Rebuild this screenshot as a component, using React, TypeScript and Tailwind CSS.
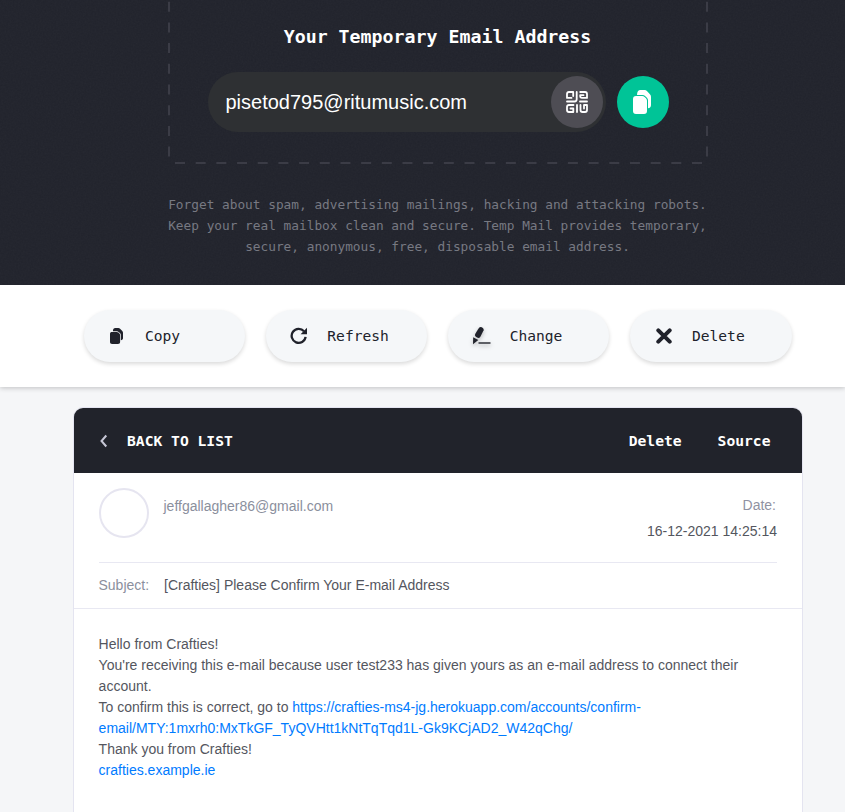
import type { ReactNode } from 'react';

const MONO = "font-['DejaVu_Sans_Mono','Liberation_Mono',monospace]";

function CopyIcon({ className }: { className?: string }) {
  return (
    <svg viewBox="0 0 18 24" preserveAspectRatio="none" className={className} fill="currentColor">
      <path d="M4 5C4.200 1.600 5.200 0 7.400 0h4.200c1 0 1.700.3 2.300 1l2.800 3c.9.8 1.300 1.800 1.300 3v8c0 2-1 3-3 3.200V10.500c0-1.400-.6-2.500-1.600-3.300l-1.100-1c-.8-.7-1.700-1.200-2.800-1.200z" />
      <path d="M3 6h6.200c1 0 1.700.3 2.400.9l1.400 1.400c.7.7 1 1.500 1 2.500V21c0 2-1 3-3 3H3c-2 0-3-1-3-3V9c0-2 1-3 3-3z" />
    </svg>
  );
}

function QrIcon() {
  return (
    <svg width="22" height="22" viewBox="0 0 22 22" fill="none" stroke="white" strokeWidth="1.800" strokeLinejoin="round" strokeLinecap="round">
      <path d="M5.500 6.900H1V3Q1 1 3 1H7.200V5" />
      <path d="M10.700 1V8.300Q10.700 10.500 8.500 10.500H1" />
      <path d="M14.200 1H19Q21 1 21 3V6.900H16Q14.200 6.900 14.200 5V4.200H17.500" />
      <path d="M14 10.500H21" />
      <path d="M7.500 14H3Q1 14 1 16V19Q1 21 3 21H7.300V17.500H4.500" />
      <path d="M11 14V21M14.500 14V19Q14.500 21 16.500 21H19Q21 21 21 19V14H18V17.500" />
    </svg>
  );
}

function RefreshIcon() {
  return (
    <svg width="18" height="18" viewBox="0 0 18 18" fill="none">
      <path d="M14 4.300A7 7 0 1 0 15.600 9.800" stroke="#20222b" strokeWidth="2.300" />
      <path d="M17 .8V7.200H10.600z" fill="#20222b" />
    </svg>
  );
}

function ChangeIcon() {
  return (
    <svg width="20" height="20" viewBox="0 0 20 20" className="drop-shadow-[0_2px_2px_rgba(0,0,0,0.25)]">
      <path d="M6.900 3.400 8.300 1.500Q9.400.5 10.800 1.300L11.800 1.900Q13.100 2.700 12.600 4.200L9.500 10.400Q8.400 12.300 6.700 11.800L4.800 10.700Q3.400 9.600 4.200 7.900z" fill="#20222b" />
      <path d="M2.200 11.300 7.300 14.100 2 18.300z" fill="#20222b" />
      <path d="M7.500 17H19.500" stroke="#55575d" strokeWidth="1.900" />
    </svg>
  );
}

function ActionButton({ icon, label }: { icon: ReactNode; label: string }) {
  return (
    <button className="flex h-[52px] items-center rounded-full bg-[#f5f7f9] pl-[23px] shadow-[0_2px_4px_rgba(0,0,0,0.15)]">
      <span className="flex w-5 justify-center">{icon}</span>
      <span className={`${MONO} ml-[18.500px] text-[14.600px] text-[#20222b]`}>{label}</span>
    </button>
  );
}

export default function App() {
  return (
    <div className="h-[812px] overflow-hidden bg-[#f5f6f8] font-['Liberation_Sans',Arial,sans-serif]">
      <header className="relative z-10 h-[285px] bg-[#21232c]">
        <svg className="pointer-events-none absolute inset-0 opacity-[0.035]" width="845" height="285">
          <filter id="grain" x="0" y="0" width="100%" height="100%">
            <feTurbulence type="fractalNoise" baseFrequency="0.6" numOctaves="2" seed="4" />
            <feColorMatrix type="saturate" values="0" />
          </filter>
          <rect width="845" height="285" filter="url(#grain)" />
        </svg>
        <svg className="pointer-events-none absolute top-0 left-0" width="845" height="170" fill="none" stroke="#3b3c46" strokeWidth="2">
          <path d="M169 1.700V157M707 1.700V157" strokeDasharray="10 10.700" />
          <path d="M175 163H703" strokeDasharray="10 10.680" />
        </svg>
        <div className="relative ml-[168px] flex w-[539px] flex-col items-center pt-[25px]">
          <h1 className={`${MONO} h-6 text-[18.260px] leading-6 font-bold whitespace-nowrap text-white`}>Your Temporary Email Address</h1>
          <div className="mt-[23px] flex items-center gap-[11px] pl-[1px]">
            <div className="flex h-[60px] w-[398px] items-center justify-between rounded-[30px] bg-[#2e3033] pr-[3px] pl-[18px]">
              <span className="text-[20px] text-white">pisetod795@ritumusic.com</span>
              <button className="flex size-[52px] items-center justify-center rounded-full bg-[#4e4d54]">
                <QrIcon />
              </button>
            </div>
            <button className="flex size-[52px] items-center justify-center rounded-full bg-[#00c497] pr-[1px] text-white">
              <CopyIcon className="h-6 w-[18px]" />
            </button>
          </div>
          <p className={`${MONO} mt-[62px] text-center text-[12.790px] leading-[21px] whitespace-nowrap text-[#777982]`}>
            Forget about spam, advertising mailings, hacking and attacking robots.
            <br />
            Keep your real mailbox clean and secure. Temp Mail provides temporary,
            <br />
            secure, anonymous, free, disposable email address.
          </p>
        </div>
      </header>

      <nav className="relative h-[102px] bg-white px-[53px] pt-[25px] pl-[83.500px] shadow-[0_1px_5px_rgba(0,0,0,0.22)]">
        <div className="grid w-[708px] grid-cols-4 gap-[21.300px]">
          <ActionButton icon={<CopyIcon className="h-[16px] w-[13px] text-[#20222b]" />} label="Copy" />
          <ActionButton icon={<RefreshIcon />} label="Refresh" />
          <ActionButton icon={<ChangeIcon />} label="Change" />
          <ActionButton
            icon={
              <svg width="16" height="16" viewBox="0 0 16 16" stroke="#20222b" strokeWidth="4" strokeLinecap="round" className="ml-[2px]">
                <path d="M2.300 2.300 13.700 13.700M13.700 2.300 2.300 13.700" />
              </svg>
            }
            label="Delete"
          />
        </div>
      </nav>

      <main className="mt-5 ml-[73px] h-[440px] w-[730px] overflow-hidden rounded-t-[10px] border border-[#e4e4f0] bg-white">
        <div className={`${MONO} flex h-[65px] items-center bg-[#21232b] pr-[31.500px] pl-[25px] text-[14.650px] font-bold text-white`}>
          <svg width="9" height="14" viewBox="0 0 9 14" fill="none" stroke="#c6c6d5" strokeWidth="2">
            <path d="M7.300 1.500 2.500 7l4.800 5.500" />
          </svg>
          <span className="ml-[19px]">BACK TO LIST</span>
          <span className="ml-auto">Delete</span>
          <span className="ml-[36px]">Source</span>
        </div>
        <div className="mx-[25px] flex h-[90px] border-b border-[#e8e8f2] pt-[15px] text-[14px]">
          <div className="size-[50px] rounded-full border-2 border-[#e6e5f0]" />
          <span className="mt-[8px] ml-[14.500px] text-[#8b8f9d]">jeffgallagher86@gmail.com</span>
          <div className="mt-[4px] ml-auto text-right leading-[26px]">
            <div className="pr-[1px] text-[#9092a2]">Date:</div>
            <div className="text-[#54565e]">16-12-2021 14:25:14</div>
          </div>
        </div>
        <div className="flex h-[46px] items-center border-b border-[#e8e8f2] pr-[25px] pl-[24.500px] text-[14px]">
          <span className="w-[65.500px] text-[#8b8f9d]">Subject:</span>
          <span className="text-[#54565e]">[Crafties] Please Confirm Your E-mail Address</span>
        </div>
        <div className="pt-[25px] pr-[25px] pl-[24.600px] text-[14px] leading-[21px] whitespace-nowrap text-[#54565e]">
          Hello from Crafties!
          <br />
          You're receiving this e-mail because user test233 has given yours as an e-mail address to connect their
          <br />
          account.
          <br />
          To confirm this is correct, go to{' '}
          <a className="text-[#007bff]">
            https://crafties-ms4-jg.herokuapp.com/accounts/confirm-
            <br />
            email/MTY:1mxrh0:MxTkGF_TyQVHtt1kNtTqTqd1L-Gk9KCjAD2_W42qChg/
          </a>
          <br />
          Thank you from Crafties!
          <br />
          <a className="text-[#007bff]">crafties.example.ie</a>
        </div>
      </main>
    </div>
  );
}
